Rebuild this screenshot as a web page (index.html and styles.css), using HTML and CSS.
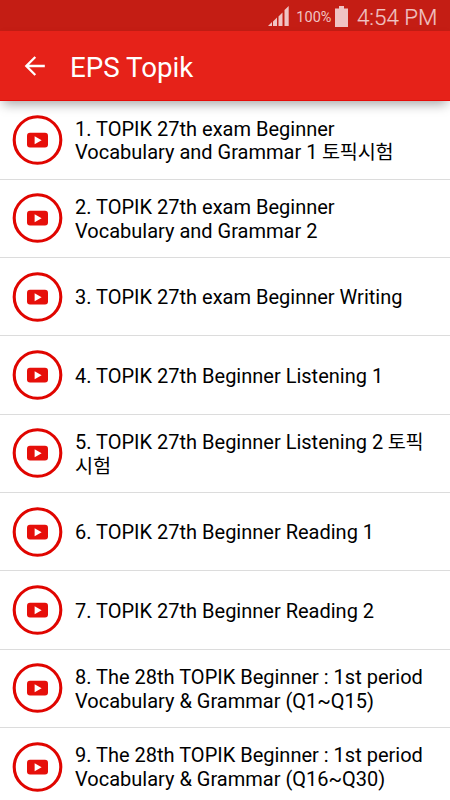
FILE: index.html
```html
<!DOCTYPE html>
<html lang="en">
<head>
    <meta charset="UTF-8">
    <meta name="viewport" content="width=device-width, initial-scale=1.0">
    <title>EPS Topik</title>
    <link rel="stylesheet" href="styles.css">
</head>
<body>
    <!-- icon shared by all the rows -->
    <svg width="0" height="0" class="hidden">
        <symbol id="play" viewBox="0 0 50 50">
            <circle cx="25" cy="25" r="23.3" fill="#fff" stroke="#e00500" stroke-width="3.1"/>
            <rect x="14.5" y="17.8" width="21" height="14.6" rx="3" fill="#e60f0a"/>
            <path d="M22.1 21.2v8l7-4z" fill="#fff"/>
        </symbol>
    </svg>

    <div class="status-bar">
        <svg class="signal" width="21" height="20" viewBox="0 0 21 20">
            <path d="M0 20l4-4v4zM5 15.500l4-4V20H5zM10.500 10.500l4-4V20h-4zM16.500 4l4.200-4v20h-4.200z" fill="currentColor"/>
        </svg>
        <span class="percent">100%</span>
        <svg class="battery" width="13" height="21" viewBox="0 0 13 21">
            <path d="M4 0h5v2.500h4V21H0V2.500h4z" fill="currentColor"/>
        </svg>
        <span class="clock">4:54 PM</span>
    </div>

    <header class="toolbar">
        <svg class="back" width="22" height="20" viewBox="0 0 22 20">
            <path d="M11.300 1L2.300 10l9 9M2.300 10h18.500" fill="none" stroke="#fff" stroke-width="2.300"/>
        </svg>
        <h1>EPS Topik</h1>
    </header>

    <ul class="list">
        <li><svg class="icon"><use href="#play"/></svg><p>1. TOPIK 27th exam Beginner<br>Vocabulary and Grammar 1 <span class="ko" lang="ko">토픽시험</span></p></li>
        <li><svg class="icon"><use href="#play"/></svg><p>2. TOPIK 27th exam Beginner<br>Vocabulary and Grammar 2</p></li>
        <li><svg class="icon"><use href="#play"/></svg><p>3. TOPIK 27th exam Beginner Writing</p></li>
        <li><svg class="icon"><use href="#play"/></svg><p>4. TOPIK 27th Beginner Listening 1</p></li>
        <li><svg class="icon"><use href="#play"/></svg><p>5. TOPIK 27th Beginner Listening 2 <span class="ko" lang="ko">토픽<br>시험</span></p></li>
        <li><svg class="icon"><use href="#play"/></svg><p>6. TOPIK 27th Beginner Reading 1</p></li>
        <li><svg class="icon"><use href="#play"/></svg><p>7. TOPIK 27th Beginner Reading 2</p></li>
        <li><svg class="icon"><use href="#play"/></svg><p>8. The 28th TOPIK Beginner : 1st period<br>Vocabulary &amp; Grammar (Q1~Q15)</p></li>
        <li><svg class="icon"><use href="#play"/></svg><p>9. The 28th TOPIK Beginner : 1st period<br>Vocabulary &amp; Grammar (Q16~Q30)</p></li>
    </ul>
</body>
</html>
```

FILE: styles.css
```css
* {
    box-sizing: border-box;
}
body {
    margin: 0;
    height: 800px;
    overflow: hidden;
    display: flex;
    flex-direction: column;
    background: #fff;
    color: #000;
    font-family: Roboto, "Noto Sans CJK KR", sans-serif;
}
.hidden {
    display: none;
}
.status-bar {
    display: flex;
    flex: none;
    justify-content: flex-end;
    align-items: center;
    height: 31px;
    padding: 1px 12.500px 0 0;
    background: #c41d14;
    color: #f0c3c3;
}
.percent {
    margin: 2px 4px 0 7px;
    font-size: 14.5px;
}
.clock {
    margin: 2px 0 0 8.500px;
    font-size: 22.4px;
    font-weight: 300;
    -webkit-text-stroke: 0.2px;
}
.toolbar {
    position: relative;
    display: flex;
    flex: none;
    align-items: center;
    height: 70px;
    padding-left: 24px;
    background: #e62219;
    border-bottom: 1px solid #e60c08;
    box-shadow: 0 6px 11px -3px rgba(0, 0, 0, 0.36);
}
.toolbar h1 {
    margin: 4px 0 0 24px;
    color: #fff;
    font-size: 27.7px;
    font-weight: 400;
}
.list {
    margin: 0;
    padding: 0;
    list-style: none;
}
.list li {
    display: flex;
    align-items: center;
    height: 78.33px;
    padding-left: 12px;
    border-bottom: 1px solid #dcdcdc;
}
.list li:first-child {
    height: 78.6px;
}
.icon {
    flex: none;
    width: 51px;
    height: 50px;
}
.list p {
    margin: 3px 0 0 12px;
    font-size: 20px;
    line-height: 23.8px;
    white-space: nowrap;
}
.ko {
    margin-left: -0.5px;
    font-size: 19.7px;
    letter-spacing: -0.2px;
}
```
